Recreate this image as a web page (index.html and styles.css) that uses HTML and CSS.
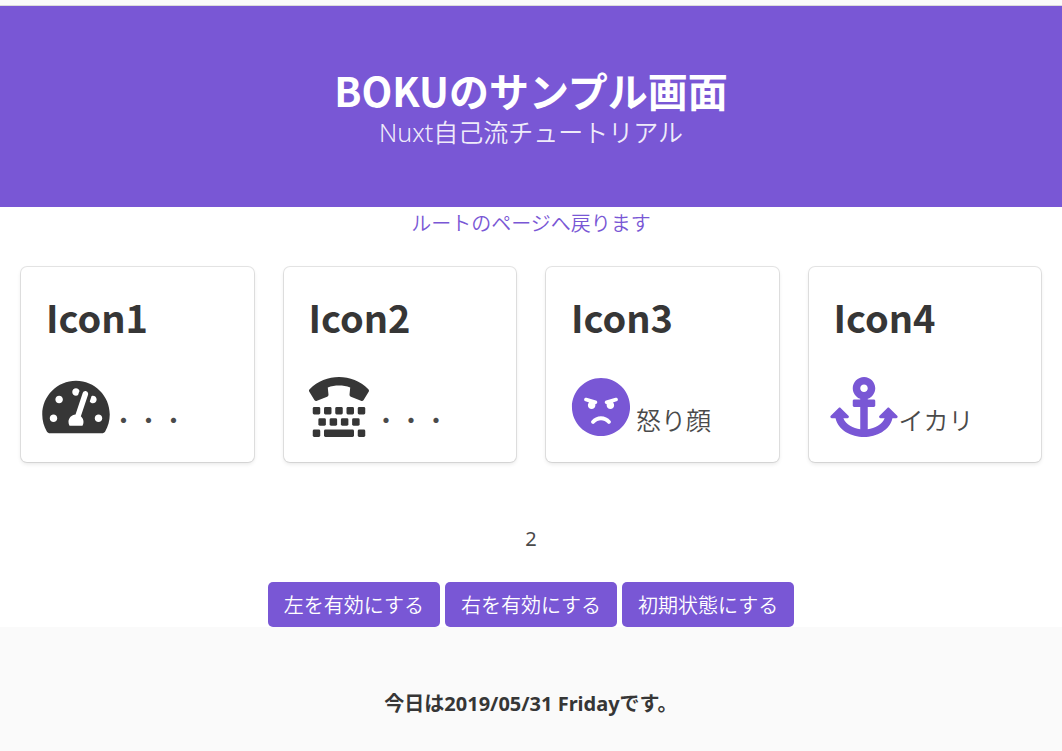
FILE: index.html
```html
<!DOCTYPE html>
<html lang="ja">
<head>
<meta charset="utf-8">
<meta name="viewport" content="width=device-width, initial-scale=1">
<title>BOKUのサンプル画面</title>
<link rel="stylesheet" href="styles.css">
</head>
<body>
<div class="topbar"></div>
<header class="hero">
  <h1 class="hero-title">BOKUのサンプル画面</h1>
  <p class="hero-subtitle">Nuxt自己流チュートリアル</p>
</header>
<main>
  <nav class="back"><a href="/">ルートのページへ戻ります</a></nav>
  <div class="cards">
    <section class="card">
      <h2 class="card-title">Icon1</h2>
      <div class="card-body">
        <span class="icon"><svg class="wide" viewBox="0 0 576 512" aria-hidden="true"><path d="M288 32C128.94 32 0 160.94 0 320c0 52.8 14.25 102.26 39.06 144.8 5.61 9.62 16.3 15.2 27.44 15.2h443c11.14 0 21.83-5.58 27.44-15.2C561.75 422.26 576 372.8 576 320c0-159.06-128.94-288-288-288zm0 64c14.71 0 26.58 10.13 30.32 23.65-1.11 2.26-2.64 4.23-3.45 6.67l-9.22 27.67c-5.13 3.49-10.97 6.01-17.64 6.01-17.67 0-32-14.33-32-32S270.33 96 288 96zM96 384c-17.67 0-32-14.33-32-32s14.33-32 32-32 32 14.33 32 32-14.33 32-32 32zm48-160c-17.67 0-32-14.33-32-32s14.33-32 32-32 32 14.33 32 32-14.33 32-32 32zm246.77-72.41l-61.33 184C343.13 347.33 352 364.54 352 384c0 11.72-3.38 22.55-8.88 32H232.88c-5.5-9.45-8.88-20.28-8.88-32 0-33.94 26.5-61.43 59.9-63.59l61.34-184.01c4.17-12.56 17.73-19.45 30.36-15.17 12.57 4.19 19.35 17.79 15.17 30.36zm14.66 57.2l15.52-46.55c3.47-1.29 7.13-2.23 11.05-2.23 17.67 0 32 14.33 32 32s-14.33 32-32 32c-11.38-.01-20.89-6.28-26.57-15.22zM480 384c-17.67 0-32-14.33-32-32s14.33-32 32-32 32 14.33 32 32-14.33 32-32 32z"/></svg></span>
        <span class="card-label">・・・</span>
      </div>
    </section>
    <section class="card">
      <h2 class="card-title">Icon2</h2>
      <div class="card-body">
        <span class="icon"><svg viewBox="0 0 512 512" aria-hidden="true"><path d="M5.37 103.822c138.532-138.532 362.936-138.326 501.262 0 6.078 6.078 7.074 15.496 2.583 22.681l-43.214 69.138a18.332 18.332 0 0 1-22.356 7.305l-86.422-34.569a18.335 18.335 0 0 1-11.434-18.846L351.741 90c-62.145-22.454-130.636-21.986-191.483 0l5.953 59.532a18.331 18.331 0 0 1-11.434 18.846l-86.423 34.568a18.334 18.334 0 0 1-22.356-7.305L2.787 126.502a18.333 18.333 0 0 1 2.583-22.68z"/><g><rect x="32" y="256" width="64" height="64" rx="12"/><rect x="128" y="256" width="64" height="64" rx="12"/><rect x="224" y="256" width="64" height="64" rx="12"/><rect x="320" y="256" width="64" height="64" rx="12"/><rect x="416" y="256" width="64" height="64" rx="12"/><rect x="80" y="352" width="64" height="64" rx="12"/><rect x="176" y="352" width="64" height="64" rx="12"/><rect x="272" y="352" width="64" height="64" rx="12"/><rect x="368" y="352" width="64" height="64" rx="12"/><rect x="32" y="448" width="64" height="64" rx="12"/><rect x="128" y="448" width="256" height="64" rx="12"/><rect x="416" y="448" width="64" height="64" rx="12"/></g></svg></span>
        <span class="card-label">・・・</span>
      </div>
    </section>
    <section class="card">
      <h2 class="card-title">Icon3</h2>
      <div class="card-body">
        <span class="icon primary"><svg viewBox="-8 0 512 512" aria-hidden="true"><path d="M248 8C111 8 0 119 0 256s111 248 248 248 248-111 248-248S385 8 248 8zM136 240c0-9.3 4.1-17.5 10.5-23.4l-31-9.3c-8.5-2.5-13.3-11.5-10.7-19.9 2.5-8.5 11.4-13.2 19.9-10.7l80 24c8.5 2.5 13.3 11.5 10.7 19.9-2.1 6.9-8.4 11.4-15.3 11.4-.5 0-1.1-.2-1.7-.2.7 2.7 1.7 5.3 1.7 8.2 0 17.7-14.3 32-32 32S136 257.7 136 240zm168 154.2c-27.8-33.4-84.2-33.4-112.1 0-13.5 16.3-38.2-4.2-24.6-20.5 20-24 49.4-37.8 80.6-37.8s60.6 13.8 80.6 37.8c13.8 16.5-11.1 36.6-24.5 20.5zm76.6-186.9l-31 9.3c6.3 5.8 10.5 14.1 10.5 23.4 0 17.7-14.3 32-32 32s-32-14.3-32-32c0-2.9.9-5.6 1.7-8.2-.6.1-1.1.2-1.7.2-6.9 0-13.2-4.5-15.3-11.4-2.5-8.5 2.3-17.4 10.7-19.9l80-24c8.4-2.5 17.4 2.3 19.9 10.7 2.5 8.5-2.3 17.4-10.8 19.9z"/></svg></span>
        <span class="card-label">怒り顔</span>
      </div>
    </section>
    <section class="card">
      <h2 class="card-title">Icon4</h2>
      <div class="card-body">
        <span class="icon primary"><svg class="wide" viewBox="0 0 576 512" aria-hidden="true"><path d="M12.971 352h32.394C67.172 454.735 181.944 512 288 512c106.229 0 220.853-57.38 242.635-160h32.394c10.691 0 16.045-12.926 8.485-20.485l-67.029-67.029c-4.686-4.686-12.284-4.686-16.971 0l-67.029 67.029c-7.56 7.56-2.206 20.485 8.485 20.485h35.146c-20.29 54.317-84.963 86.588-144.117 94.015V256h52c6.627 0 12-5.373 12-12v-40c0-6.627-5.373-12-12-12h-52v-5.47c37.281-13.226 63.995-48.853 64.006-90.735C384.02 43.372 341.234.08 288.81 0 235.72-.08 192 43 192 96c0 41.807 26.748 77.35 64 90.53V192h-52c-6.627 0-12 5.373-12 12v40c0 6.627 5.373 12 12 12h52v190.015c-58.936-7.399-123.82-39.679-144.117-94.015h35.146c10.691 0 16.045-12.926 8.485-20.485l-67.029-67.029c-4.686-4.686-12.284-4.686-16.971 0L4.485 331.515C-3.074 339.074 2.28 352 12.971 352zM288 64c17.645 0 32 14.355 32 32s-14.355 32-32 32-32-14.355-32-32 14.355-32 32-32z"/></svg></span>
        <span class="card-label">イカリ</span>
      </div>
    </section>
  </div>
  <p class="count">2</p>
  <div class="buttons">
    <button type="button" class="button">左を有効にする</button>
    <button type="button" class="button">右を有効にする</button>
    <button type="button" class="button">初期状態にする</button>
  </div>
</main>
<footer class="footer"><strong>今日は2019/05/31 Fridayです。</strong></footer>
</body>
</html>
```
FILE: styles.css
```css
* {
  box-sizing: border-box;
}

body {
  margin: 0;
  min-height: 100vh;
  display: flex;
  flex-direction: column;
  background: #fff;
  color: #4a4a4a;
  font-family: "Noto Sans", "Noto Sans CJK JP", sans-serif;
  font-size: 20px;
  line-height: 30px;
}

h1, h2, p {
  margin: 0;
}

.topbar {
  height: 6px;
  background: #fafafa;
  border-bottom: 1px solid #dbdbdb;
}

.hero {
  padding: 60px 30px 56px;
  background: #7957d5;
  color: #fff;
  text-align: center;
}

.hero-title {
  font-family: "Noto Sans CJK JP", sans-serif;
  font-size: 40px;
  font-weight: 700;
  line-height: 48px;
}

.hero-subtitle {
  font-size: 25px;
  font-weight: 350;
  line-height: 37px;
  color: rgba(255, 255, 255, 0.9);
}

.back {
  padding-top: 2px;
  text-align: center;
  font-weight: 350;
}

.back a {
  color: #7957d5;
  text-decoration: none;
}

.cards {
  display: grid;
  grid-template-columns: repeat(4, 1fr);
  gap: 30px;
  padding: 28px 21px 0;
}

.card {
  padding: 25px;
  border-radius: 6px;
  background: #fff;
  box-shadow: 0 2px 4px rgba(10, 10, 10, 0.1), 0 0 0 1px rgba(10, 10, 10, 0.1);
}

.card-title {
  color: #363636;
  font-family: "Noto Sans CJK JP", sans-serif;
  font-size: 38px;
  font-weight: 700;
  line-height: 50px;
}

.card-body {
  display: flex;
  align-items: flex-end;
  gap: 5px;
  margin-top: 35px;
}

.icon {
  display: flex;
  flex: none;
  justify-content: center;
  width: 60px;
  height: 60px;
  color: #363636;
}

.icon svg {
  flex: none;
  width: 60px;
  height: 60px;
  fill: currentColor;
}

.icon .wide {
  width: 68px;
}

.primary {
  color: #7957d5;
}

.card-label {
  font-size: 25px;
  font-weight: 350;
  line-height: 34px;
}

.count {
  margin-top: 62px;
  text-align: center;
}

.buttons {
  display: flex;
  justify-content: center;
  gap: 5px;
  margin-top: 28px;
}

.button {
  height: 45px;
  padding: 3px 16px 0;
  border: 0;
  border-radius: 5px;
  background: #7957d5;
  color: #fff;
  font: inherit;
  font-weight: 350;
}

.footer {
  flex: 1;
  padding: 62px 30px 28px;
  background: #fafafa;
  color: #363636;
  text-align: center;
}
```
